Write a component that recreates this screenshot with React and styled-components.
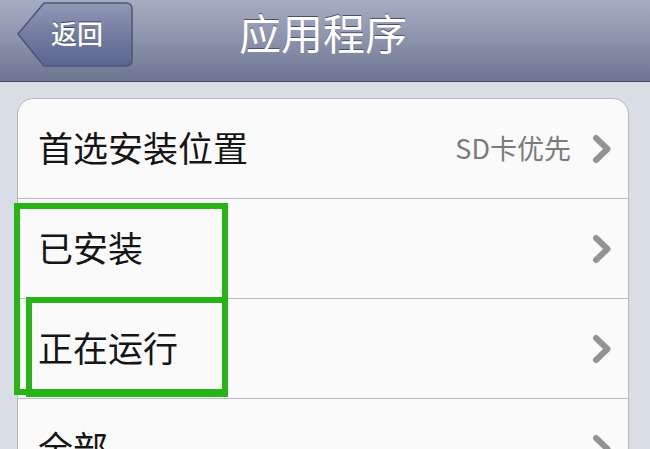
import React from "react";
import styled, { createGlobalStyle } from "styled-components";

const GlobalStyle = createGlobalStyle`
  html, body {
    margin: 0;
    padding: 0;
    background: #d8dde6;
  }
  body {
    font-family: "Noto Sans CJK SC", "Noto Sans", sans-serif;
  }
`;

const Screen = styled.div`
  position: relative;
  width: 650px;
  height: 449px;
  overflow: hidden;
  background: #d8dde6;
`;

const NavBar = styled.div`
  position: relative;
  display: flex;
  align-items: center;
  justify-content: center;
  height: 81px;
  background: linear-gradient(#a6adc2, #8b93ab 50%, #6c7491);
  border-bottom: 1px solid #454c60;
`;

const BackButton = styled.div`
  position: absolute;
  left: 17px;
  top: 2px;
  width: 117px;
  height: 66px;
  display: flex;
  align-items: center;
  justify-content: center;
  padding-left: 3px;
  box-sizing: border-box;
  color: #fff;
  font-size: 26px;
  font-weight: 500;
  text-shadow: 0 -1px 0 #3d4462;

  svg {
    position: absolute;
    inset: 0;
  }
  span {
    position: relative;
    margin-top: -6px;
  }
`;

const Title = styled.div`
  color: #fff;
  font-size: 42px;
  margin-top: -18px;
  margin-left: -4px;
  text-shadow: 0 -1px 0 #4a5168;
`;

const Content = styled.div`
  padding: 16px 21px 0 17px;
`;

const Panel = styled.div`
  background: #fafafa;
  border: 1px solid #b5b9c1;
  border-radius: 16px;
`;

const Row = styled.div`
  display: flex;
  align-items: center;
  height: 99px;
  padding: 0 16px 0 20px;
  border-top: ${(p) => (p.$first ? "none" : "1px solid #b8babe")};
`;

const Label = styled.div`
  flex: 1;
  font-size: 35px;
  color: #151515;
  margin-top: -4px;
`;

const Value = styled.div`
  font-size: 27px;
  color: #7b7b7b;
  margin-right: 21px;
  margin-top: -3px;
`;

const Highlight = styled.div`
  position: absolute;
  box-sizing: border-box;
  border: 6px solid #26b515;
  left: ${(p) => p.$x}px;
  top: ${(p) => p.$y}px;
  width: ${(p) => p.$w}px;
  height: ${(p) => p.$h}px;
`;

function Chevron() {
  return (
    <svg width="20" height="30" viewBox="0 0 20 30">
      <polyline
        points="4,4 15.5,15 4,26"
        fill="none"
        stroke="#939393"
        strokeWidth="6"
        strokeLinecap="round"
        strokeLinejoin="round"
      />
    </svg>
  );
}

function BackShape() {
  return (
    <svg width="117" height="66" viewBox="0 0 117 66">
      <defs>
        <linearGradient id="backFill" x1="0" y1="0" x2="0" y2="1">
          <stop offset="0" stopColor="#9199b6" />
          <stop offset="0.5" stopColor="#737ca0" />
          <stop offset="1" stopColor="#5a6490" />
        </linearGradient>
      </defs>
      <path
        d="M1,32 L27,1 H109 Q115,1 115,7 V58 Q115,64 109,64 H27 Z"
        fill="url(#backFill)"
        stroke="#4d5576"
        strokeWidth="1.5"
      />
    </svg>
  );
}

const rows = [
  { label: "首选安装位置", value: "SD卡优先" },
  { label: "已安装" },
  { label: "正在运行" },
  { label: "全部" },
];

export default function App() {
  return (
    <>
      <GlobalStyle />
      <Screen>
        <NavBar>
          <BackButton>
            <BackShape />
            <span>返回</span>
          </BackButton>
          <Title>应用程序</Title>
        </NavBar>
        <Content>
          <Panel>
            {rows.map((r, i) => (
              <Row key={r.label} $first={i === 0}>
                <Label>{r.label}</Label>
                {r.value && <Value>{r.value}</Value>}
                <Chevron />
              </Row>
            ))}
          </Panel>
        </Content>
        <Highlight $x={14} $y={203} $w={214} $h={192} />
        <Highlight $x={26} $y={297} $w={202} $h={100} />
      </Screen>
    </>
  );
}
